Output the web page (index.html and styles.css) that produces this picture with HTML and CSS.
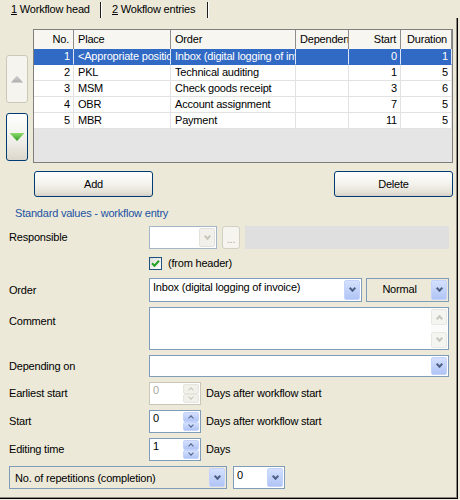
FILE: index.html
```html
<!DOCTYPE html>
<html lang="en">
  <head>
    <meta charset="UTF-8" />
    <title>Workflow entries</title>
    <link rel="stylesheet" href="styles.css">
  </head>
  <body>
    <div class="tabs">
      <div class="tab tab-head"><span><u>1</u> Workflow head</span></div>
      <div class="tab tab-entries"><span><u>2</u> Wokflow entries</span></div>
    </div>
    <main class="panel">
      <div class="list-area">
        <div class="move-btns">
          <button class="move" disabled><span class="arrow-up"></span></button>
          <button class="move"><span class="arrow-down"></span></button>
        </div>
        <div class="grid">
          <div class="row head">
            <span class="num">No.</span><span>Place</span><span>Order</span><span>Dependen</span><span class="num">Start</span><span class="num">Duration</span>
          </div>
          <div class="row selected">
            <span class="num">1</span><span>&lt;Appropriate position&gt;</span><span>Inbox (digital logging of invoice)</span><span></span><span class="num">0</span><span class="num">1</span>
          </div>
          <div class="row">
            <span class="num">2</span><span>PKL</span><span>Technical auditing</span><span></span><span class="num">1</span><span class="num">5</span>
          </div>
          <div class="row">
            <span class="num">3</span><span>MSM</span><span>Check goods receipt</span><span></span><span class="num">3</span><span class="num">6</span>
          </div>
          <div class="row">
            <span class="num">4</span><span>OBR</span><span>Account assignment</span><span></span><span class="num">7</span><span class="num">5</span>
          </div>
          <div class="row">
            <span class="num">5</span><span>MBR</span><span>Payment</span><span></span><span class="num">11</span><span class="num">5</span>
          </div>
          <div class="grid-empty"></div>
        </div>
      </div>

      <div class="list-buttons">
        <button class="btn">Add</button>
        <button class="btn">Delete</button>
      </div>

      <h2 class="group-title">Standard values - workflow entry</h2>

      <div class="form">
        <div class="field">
          <span class="label">Responsible</span>
          <div class="combo combo-resp disabled">
            <span class="combo-text"></span>
            <span class="drop"><i class="chev"></i></span>
          </div>
          <button class="ellipsis" disabled>...</button>
          <div class="readonly-box"></div>
        </div>

        <div class="field check-row">
          <span class="check-box">
            <svg width="9" height="9" viewBox="0 0 9 9"><polyline points="1,4.2 3.5,6.7 8,1.8" fill="none" stroke="#21a121" stroke-width="2"/></svg>
          </span>
          <span>(from header)</span>
        </div>

        <div class="field field-order">
          <span class="label">Order</span>
          <div class="combo combo-order">
            <span class="combo-text">Inbox (digital logging of invoice)</span>
            <span class="drop"><i class="chev"></i></span>
          </div>
          <div class="combo combo-prio">
            <span class="combo-text">Normal</span>
            <span class="drop"><i class="chev"></i></span>
          </div>
        </div>

        <div class="field field-comment">
          <span class="label">Comment</span>
          <div class="memo">
            <div class="memo-text"></div>
            <div class="vscroll">
              <span class="scroll-btn"><i class="chev chev-up"></i></span>
              <span class="scroll-btn"><i class="chev"></i></span>
            </div>
          </div>
        </div>

        <div class="field field-dep">
          <span class="label">Depending on</span>
          <div class="combo combo-dep">
            <span class="combo-text"></span>
            <span class="drop"><i class="chev"></i></span>
          </div>
        </div>

        <div class="field">
          <span class="label">Earliest start</span>
          <div class="spin disabled">
            <span class="spin-text">0</span>
            <span class="spin-btns">
              <span class="spin-btn"><i class="mini mini-up"></i></span>
              <span class="spin-btn"><i class="mini"></i></span>
            </span>
          </div>
          <span class="unit">Days after workflow start</span>
        </div>

        <div class="field">
          <span class="label">Start</span>
          <div class="spin">
            <span class="spin-text">0</span>
            <span class="spin-btns">
              <span class="spin-btn"><i class="mini mini-up"></i></span>
              <span class="spin-btn"><i class="mini"></i></span>
            </span>
          </div>
          <span class="unit">Days after workflow start</span>
        </div>

        <div class="field">
          <span class="label">Editing time</span>
          <div class="spin">
            <span class="spin-text">1</span>
            <span class="spin-btns">
              <span class="spin-btn"><i class="mini mini-up"></i></span>
              <span class="spin-btn"><i class="mini"></i></span>
            </span>
          </div>
          <span class="unit">Days</span>
        </div>

        <div class="field">
          <div class="combo combo-rep">
            <span class="combo-text">No. of repetitions (completion)</span>
            <span class="drop"><i class="chev"></i></span>
          </div>
          <div class="combo combo-count">
            <span class="combo-text">0</span>
            <span class="drop"><i class="chev"></i></span>
          </div>
        </div>
      </div>
    </main>
  </body>
</html>
```
FILE: styles.css
```css
* {
  margin: 0;
  padding: 0;
  box-sizing: border-box;
}

body {
  width: 460px;
  height: 500px;
  overflow: hidden;
  background-color: #ece9d8;
  color: #000;
  font-family: "Liberation Sans", Arial, sans-serif;
  font-size: 11px;
  font-weight: normal;
  line-height: 13px;
  letter-spacing: -0.2px;
}

button {
  font: inherit;
  font-weight: normal;
  letter-spacing: inherit;
  color: inherit;
}

/* tabs */
.tabs {
  display: flex;
  height: 18px;
}
.tab {
  display: flex;
  align-items: center;
  height: 16px;
  margin-top: 2px;
  padding-left: 11px;
  padding-bottom: 1px;
  border-right: 1px solid #1e1e1e;
  box-shadow: 1px 0 0 #fff;
  white-space: pre;
}
.tab-head {
  width: 101px;
}
.tab-entries {
  width: 107px;
}

.panel {
  width: 458px;
  height: 481px;
  padding-top: 11px;
  border-right: 1px solid #000;
  border-bottom: 1px solid #000;
  box-shadow: inset -1px -1px 0 #8a877a;
}

/* list with move buttons */
.list-area {
  display: flex;
  gap: 5px;
  padding: 0 4px 0 6px;
}
.move-btns {
  display: flex;
  flex-direction: column;
  gap: 10px;
  width: 22px;
  padding-top: 26px;
}
.move {
  display: flex;
  justify-content: center;
  align-items: center;
  height: 48px;
  border: 1px solid #003c74;
  border-radius: 3px;
  background: linear-gradient(#fff, #efeee8 60%, #dcd7cb);
}
.move:disabled {
  border-color: #cbc8bb;
  background: #f5f4ee;
}
.arrow-up {
  width: 12px;
  height: 7px;
  clip-path: polygon(50% 0, 100% 100%, 0 100%);
  background: linear-gradient(#d2d2d2, #a9a9a9);
}
.arrow-down {
  width: 15px;
  height: 8px;
  clip-path: polygon(0 0, 100% 0, 50% 100%);
  background: linear-gradient(#8edc6c, #2f9b22);
}

.grid {
  display: flex;
  flex-direction: column;
  width: 420px;
  height: 134px;
  border: 1px solid #7f7f7f;
  background-color: #fff;
}
.row {
  display: grid;
  grid-template-columns: 40px 97px 125px 53px 52px 51px;
  height: 16px;
}
.row span {
  overflow: hidden;
  white-space: nowrap;
  padding-left: 4px;
  line-height: 15px;
  border-right: 1px solid #e2e2e2;
  border-bottom: 1px solid #e2e2e2;
}
.row .num {
  text-align: right;
  padding-left: 0;
  padding-right: 3px;
}
.row.head {
  height: 19px;
  background-color: #f7f6f1;
}
.row.head span {
  line-height: 19px;
  border-bottom: none;
  border-right-color: #8d8d8d;
}
.row.head .num {
  padding-right: 4px;
}
.row.selected {
  background-color: #316ac5;
  color: #fff;
}
.row.selected span {
  border-right-color: #dfe6f3;
  border-bottom-color: #316ac5;
}
.grid-empty {
  flex: 1;
  background-color: #e5e5e5;
}

.list-buttons {
  display: flex;
  justify-content: space-between;
  margin-top: 8px;
  padding: 0 4px 0 34px;
}
.btn {
  width: 119px;
  height: 26px;
  border: 1px solid #003c74;
  border-radius: 3px;
  background: linear-gradient(#fff, #f3f2ec 50%, #e5e2d7 85%, #d6d0c5);
  cursor: pointer;
}

.group-title {
  margin-top: 9px;
  padding-left: 15px;
  font-size: 11px;
  font-weight: normal;
  line-height: 14px;
  color: #2152a3;
}

/* form */
.form {
  display: flex;
  flex-direction: column;
  gap: 5px;
  margin-top: 6px;
  padding: 0 8px 0 9px;
}
.field {
  display: flex;
  align-items: center;
  height: 23px;
}
.label {
  width: 140px;
  flex-shrink: 0;
}
.field-order {
  height: 24px;
}
.field-dep {
  height: 22px;
}
.field-comment {
  height: 43px;
  align-items: flex-start;
}
.field-comment .label {
  padding-top: 8px;
}
.check-row {
  height: 19px;
  align-items: flex-start;
  gap: 6px;
  padding: 3px 0 0 140px;
}
.check-row span:last-child {
  line-height: 13px;
}
.check-box {
  display: flex;
  justify-content: center;
  align-items: center;
  width: 13px;
  height: 13px;
  border: 1px solid #1c5180;
  background: linear-gradient(135deg, #dcdcd7, #fff);
}

.combo {
  display: flex;
  height: 100%;
  padding: 1px;
  border: 1px solid #7f9db9;
  background-color: #fff;
}
.combo-text {
  flex: 1;
  overflow: hidden;
  white-space: nowrap;
  padding: 1px 0 0 2px;
}
.drop {
  display: flex;
  justify-content: center;
  align-items: center;
  width: 16px;
  border: 1px solid #c3d3fd;
  border-radius: 2px;
  background: linear-gradient(#d4e0fd, #b0c4f5);
}
.chev {
  width: 5px;
  height: 5px;
  margin-top: -3px;
  border: solid #4d6185;
  border-width: 0 2px 2px 0;
  transform: rotate(45deg);
}
.chev-up {
  margin-top: 3px;
  transform: rotate(-135deg);
}
.combo.disabled {
  border-color: #a5b6c8;
}
.combo.disabled .drop {
  border-color: #e3e2da;
  background: #f1f0ea;
}
.combo.disabled .chev {
  border-color: #c9c7ba;
}

.combo-resp {
  width: 68px;
}
.ellipsis {
  width: 18px;
  height: 23px;
  margin-left: 5px;
  padding-top: 3px;
  border: 1px solid #d2d0c4;
  border-radius: 3px;
  background-color: #f5f4ee;
  color: #aca899;
  line-height: 19px;
}
.readonly-box {
  flex: 1;
  height: 23px;
  margin-left: 5px;
  background-color: #dfdfdf;
}

.combo-order {
  width: 213px;
}
.combo-prio {
  width: 83px;
  margin-left: 4px;
  background-color: #ece9d8;
}
.combo-prio .combo-text {
  text-align: center;
  padding: 3px 0 0;
}
.combo-dep {
  width: 300px;
}
.combo-rep {
  width: 218px;
  background-color: #ece9d8;
}
.combo-rep .combo-text {
  padding: 4px 0 0 4px;
}
.combo-count {
  width: 52px;
  margin-left: 6px;
}

.memo {
  display: flex;
  width: 300px;
  height: 43px;
  padding: 1px;
  border: 1px solid #7f9db9;
  background-color: #fff;
}
.memo-text {
  flex: 1;
}
.vscroll {
  display: flex;
  flex-direction: column;
  justify-content: space-between;
  width: 16px;
  background-color: #fbfbf9;
}
.scroll-btn {
  display: flex;
  justify-content: center;
  align-items: center;
  height: 16px;
  border: 1px solid #e8e8e2;
  border-radius: 2px;
  background-color: #f4f4f0;
}
.scroll-btn .chev {
  border-color: #c6c6bc;
}

.spin {
  display: flex;
  width: 52px;
  height: 100%;
  padding: 1px;
  border: 1px solid #7f9db9;
  background-color: #fff;
}
.spin-text {
  flex: 1;
  padding-left: 2px;
}
.spin-btns {
  display: flex;
  flex-direction: column;
  width: 16px;
}
.spin-btn {
  display: flex;
  flex: 1;
  justify-content: center;
  align-items: center;
  border: 1px solid #c3d3fd;
  border-radius: 2px;
  background: linear-gradient(#d4e0fd, #b0c4f5);
}
.mini {
  width: 4px;
  height: 4px;
  margin-top: -2px;
  border: solid #4d6185;
  border-width: 0 1.5px 1.5px 0;
  transform: rotate(45deg);
}
.mini-up {
  margin-top: 2px;
  transform: rotate(-135deg);
}
.spin.disabled {
  border-color: #c9c7ba;
  color: #aca899;
}
.spin.disabled .spin-btn {
  border-color: #e6e5de;
  background: #f1f0ea;
}
.spin.disabled .mini {
  border-color: #c9c7ba;
}
.unit {
  margin-left: 5px;
}
```
